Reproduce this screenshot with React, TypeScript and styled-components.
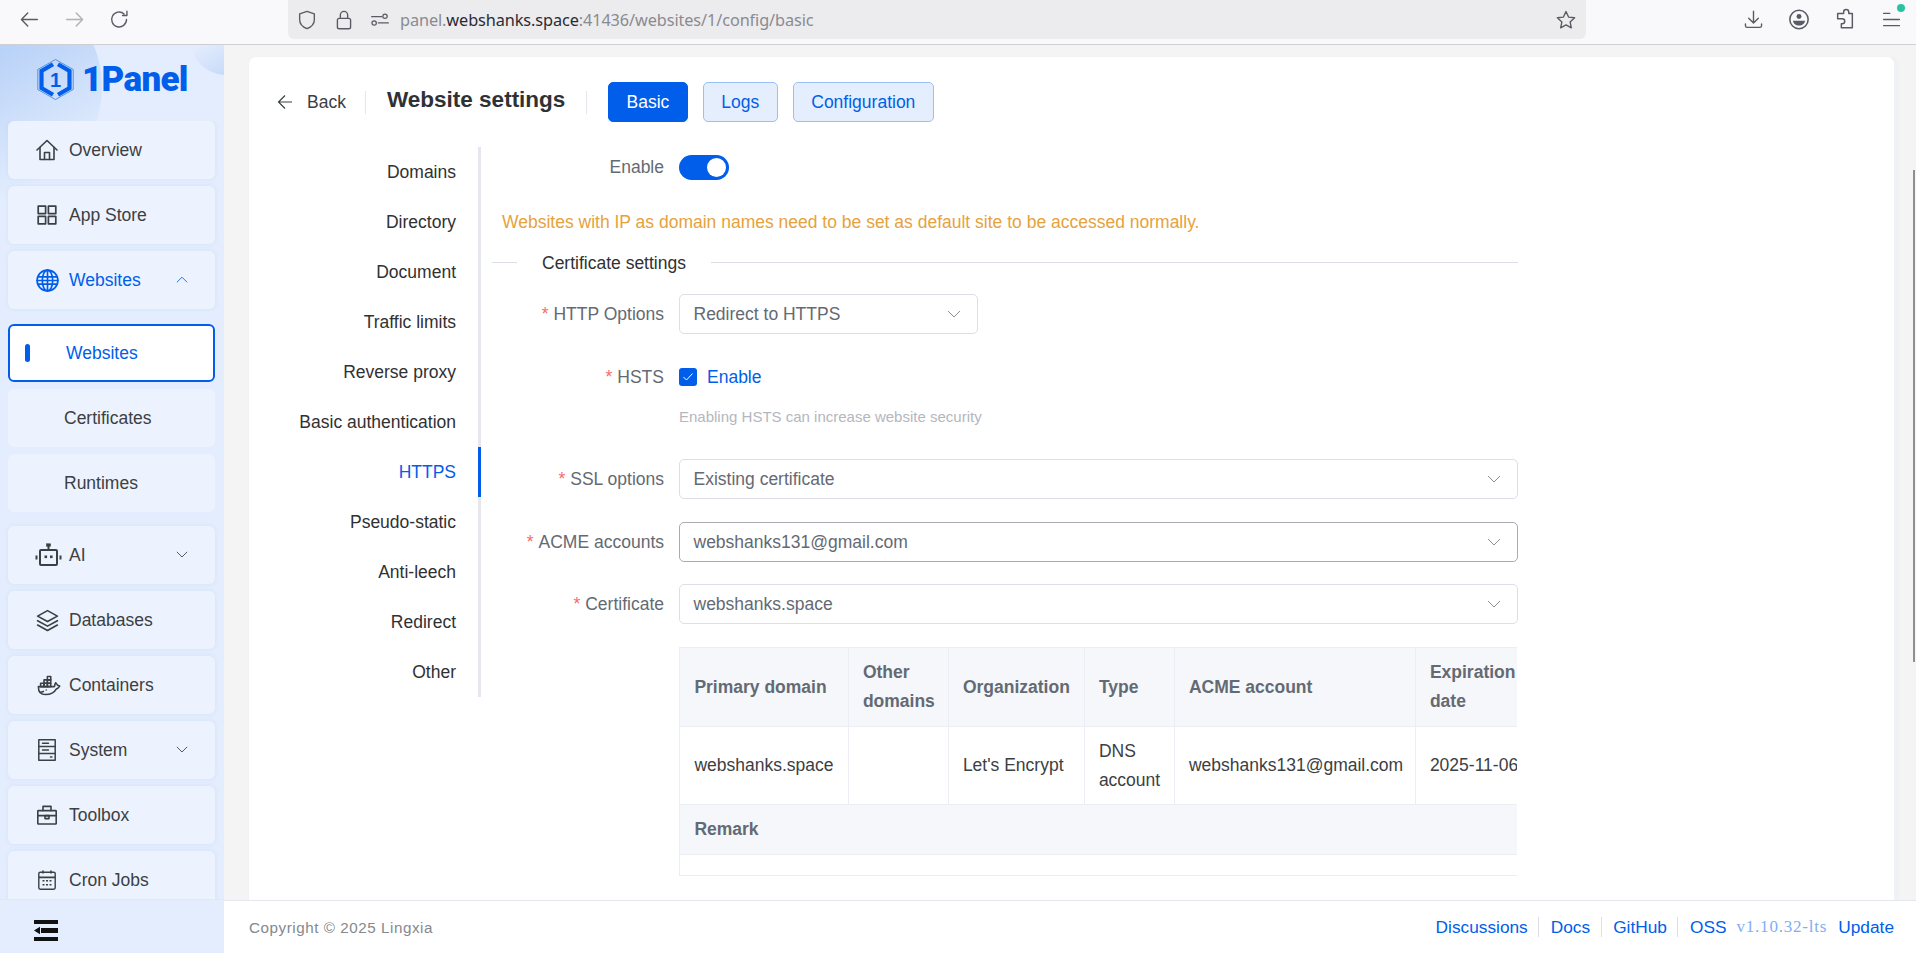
import React from "react";
import styled, { createGlobalStyle } from "styled-components";
import { TbBrandDocker } from "react-icons/tb";

const BLUE = "#005eeb";

const GlobalStyle = createGlobalStyle`
  html, body {
    margin: 0;
    padding: 0;
    height: 100%;
    overflow: hidden;
  }
  body {
    font-family: "Liberation Sans", Arial, sans-serif;
    font-size: 17.5px;
  }
  * { box-sizing: border-box; }
`;

const Ico = ({ size = 24, sw = 1.7, color = "currentColor", children }: any) => (
  <svg width={size} height={size} viewBox="0 0 24 24" fill="none" stroke={color} strokeWidth={sw} strokeLinecap="round" strokeLinejoin="round">
    {children}
  </svg>
);

const ChevronDown = ({ up = false, color = "#8a8e96", width = 14 }: any) => (
  <svg width={width} height={width * 0.6} viewBox="0 0 14 8" fill="none" stroke={color} strokeWidth="1">
    <path d={up ? "M1 7.2 7 1.2l6 6" : "M1 .8l6 6 6-6"} />
  </svg>
);

const BackArrow = () => (
  <svg width="16" height="16" viewBox="0 0 16 16" fill="none" stroke="#3c4043" strokeWidth="1.2">
    <path d="M15 8H1.500M8 1.500 1.500 8 8 14.500" />
  </svg>
);

const HomeIcon = () => (
  <Ico size={24} sw={1.6}>
    <path d="M2 12 12 2.5 22 12" />
    <path d="M5 9.5V21.5h14V9.5" />
    <path d="M9.5 21.5v-7h5v7" />
  </Ico>
);
const GridIcon = () => (
  <Ico size={24} sw={1.7}>
    <rect x="3.2" y="3.2" width="7.4" height="7.4" />
    <rect x="13.4" y="3.2" width="7.4" height="7.4" />
    <rect x="3.2" y="13.4" width="7.4" height="7.4" />
    <rect x="13.4" y="13.4" width="7.4" height="7.4" />
  </Ico>
);
const GlobeIcon = () => (
  <Ico size={25} sw={1.6}>
    <circle cx="12" cy="12" r="10" />
    <ellipse cx="12" cy="12" rx="5" ry="10" />
    <path d="M12 2v20M2.6 8.5h18.8M2 12h20M2.6 15.5h18.8" />
  </Ico>
);
const RobotIcon = () => (
  <svg width="27" height="25" viewBox="0 0 27 25" fill="none" stroke="#3c4043" strokeWidth="2">
    <rect x="5" y="7" width="17" height="15" rx="1" />
    <path d="M13.5 3v4" />
    <rect x="11.5" y="0.8" width="4" height="2.4" fill="#3c4043" strokeWidth="0.6" />
    <rect x="9.5" y="12.5" width="2.6" height="2.6" fill="#3c4043" stroke="none" />
    <rect x="15" y="12.5" width="2.6" height="2.6" fill="#3c4043" stroke="none" />
    <path d="M1.5 12.5v4M25.5 12.5v4" />
  </svg>
);
const LayersIcon = () => (
  <Ico size={25} sw={1.6}>
    <path d="M12 2.5 2.5 7.8l9.5 5.2 9.5-5.2z" />
    <path d="M2.5 12.2l9.5 5.2 9.5-5.2" />
    <path d="M2.5 16.4l9.5 5.2 9.5-5.2" />
  </Ico>
);
const ServerIcon = () => (
  <Ico size={24} sw={1.5}>
    <rect x="3.8" y="1.8" width="16.4" height="20.4" />
    <path d="M3.8 8.6h16.4M3.8 15.4h16.4M7.5 5.2h6M7.5 12h6M15.5 19h1.4" />
  </Ico>
);
const ToolboxIcon = () => (
  <Ico size={24} sw={1.6}>
    <rect x="2.8" y="7.6" width="18.4" height="13.4" rx="0.6" />
    <path d="M8 7.6V3.4h8v4.2M2.8 12.6h18.4" />
    <rect x="10" y="12.6" width="4" height="3" />
  </Ico>
);
const CalendarIcon = () => (
  <Ico size={24} sw={1.4}>
    <rect x="3.8" y="4.2" width="16.4" height="17" rx="1.4" />
    <path d="M3.8 9.4h16.4M8 2.6v3M16 2.6v3M7.5 12.8h2M11 12.8h2M14.5 12.8h2M7.5 16.8h2M11 16.8h2M14.5 16.8h2" strokeWidth="1.6" strokeLinecap="butt" />
  </Ico>
);

const ShieldIcon = () => (
  <Ico size={22} sw={1.5} color="#5b5b66">
    <path d="M12 2.5 4 5.3v6.4c0 4.8 3.2 7.900 8 9.800 4.800-1.900 8-5 8-9.800V5.300z" />
  </Ico>
);
const LockIcon = () => (
  <Ico size={22} sw={1.5} color="#5b5b66">
    <rect x="4.8" y="10.2" width="14.4" height="11.4" rx="2" />
    <path d="M8 10.2V6.6a4 4 0 0 1 8 0v3.6" />
  </Ico>
);
const TuneIcon = () => (
  <Ico size={20} sw={1.5} color="#5b5b66">
    <path d="M2 8h12M10 15.5h12" />
    <circle cx="18" cy="7.5" r="2.6" />
    <circle cx="5" cy="15.5" r="2.6" />
  </Ico>
);
const StarIcon = () => (
  <Ico size={22} sw={1.5} color="#5b5b66">
    <path d="M12 2.8l2.800 6 6.600.8-4.900 4.500 1.300 6.500L12 17.300l-5.800 3.300 1.300-6.500-4.900-4.500 6.600-.8z" />
  </Ico>
);
const DownloadIcon = () => (
  <Ico size={21} sw={1.6} color="#5b5b66">
    <path d="M12 2.5v13M6.5 10.5l5.500 5.500 5.500-5.500M2.800 17v2a2 2 0 0 0 2 2h14.400a2 2 0 0 0 2-2v-2" />
  </Ico>
);
const AccountIcon = () => (
  <Ico size={23} sw={1.7} color="#5b5b66">
    <circle cx="12" cy="12" r="10" />
    <circle cx="12" cy="8.8" r="2.7" fill="#5b5b66" stroke="none" />
    <path d="M5.400 13.400h13.200c-.4 3-3 5.200-6.600 5.200s-6.200-2.200-6.600-5.200z" fill="#5b5b66" stroke="none" />
  </Ico>
);
const PuzzleIcon = () => (
  <Ico size={22} sw={1.6} color="#5b5b66">
    <path d="M10.500 6V4.500a2.800 2.800 0 0 1 5.600 0V6H20v15.500H8v-4.300h1a2.700 2.700 0 0 0 0-5.400H4V6z" />
  </Ico>
);
const MenuIcon = () => (
  <Ico size={21} sw={1.6} color="#5b5b66">
    <path d="M3 5h7M3 12h18M3 19h18" />
  </Ico>
);
const CollapseIcon = () => (
  <svg width="24" height="21" viewBox="0 0 24 21" fill="#111">
    <rect x="0" y="0" width="24" height="4" />
    <rect x="7" y="8" width="17" height="5" />
    <rect x="0" y="17" width="24" height="4" />
    <polygon points="0,10.500 6,6.800 6,14.200" />
  </svg>
);

const LogoMark = () => (
  <svg width="37" height="41" viewBox="0 0 37 41" fill="none">
    <polygon points="18.500,0.500 36.200,10.500 36.200,30.500 18.500,40.500 0.800,30.500 0.800,10.500" stroke={BLUE} strokeWidth="0.6" />
    <path d="M16 5.200 4.500 12v17L16 35.800M21 5.200 32.500 12v17L21 35.800" stroke={BLUE} strokeWidth="4.200" />
    <text x="18.500" y="27.500" fontSize="20" fontWeight="700" textAnchor="middle" fill={BLUE} fontFamily="Liberation Sans, sans-serif">1</text>
  </svg>
);

const Page = styled.div`
  width: 1916px;
  height: 953px;
  display: flex;
  flex-direction: column;
  overflow: hidden;
  position: relative;
  background: #f4f4f4;
`;

const Toolbar = styled.header`
  height: 45px;
  flex: none;
  display: flex;
  background: #f9f9fb;
  border-bottom: 1px solid #cfcfd3;
`;

const NavGroup = styled.div`
  width: 288px;
  height: 38px;
  padding-left: 19px;
  display: flex;
  align-items: center;
  gap: 24px;
`;

const NavBtn = styled.span<{ $dim?: boolean }>`
  width: 21px;
  display: flex;
  justify-content: center;
  opacity: ${(p) => (p.$dim ? 0.45 : 1)};
`;

const AddressBar = styled.div`
  width: 1298px;
  height: 39px;
  padding: 0 9px 0 8px;
  display: flex;
  align-items: center;
  background: #ececee;
  border-radius: 0 0 6px 6px;
`;

const AddressIcons = styled.div`
  width: 104px;
  display: flex;
  align-items: center;
  gap: 15px;
`;

const Url = styled.div`
  flex: 1;
  font-family: "Noto Sans", sans-serif;
  font-size: 16.3px;
  letter-spacing: -0.1px;
  color: #8a8a90;
  white-space: nowrap;
  b {
    font-weight: 400;
    color: #2b2a33;
  }
`;

const BrowserActions = styled.div`
  height: 38px;
  padding-left: 156px;
  display: flex;
  align-items: center;
  gap: 24px;
`;

const ActionBtn = styled.span`
  position: relative;
  width: 22px;
  display: flex;
  justify-content: center;
`;

const UpdateDot = styled.i`
  position: absolute;
  top: -5px;
  right: -3px;
  width: 8px;
  height: 8px;
  border-radius: 50%;
  background: #2ac3a2;
`;

const Body = styled.div`
  flex: 1;
  min-height: 0;
  display: flex;
`;

const Sidebar = styled.aside`
  width: 224px;
  flex: none;
  position: relative;
  overflow: hidden;
  display: flex;
  flex-direction: column;
  background: #e3edfd;
  &::before {
    content: "";
    position: absolute;
    left: -118px;
    top: -68px;
    width: 220px;
    height: 220px;
    border-radius: 50%;
    background: linear-gradient(150deg, #a9c8f6 25%, #e3edfd 85%);
  }
  &::after {
    content: "";
    position: absolute;
    left: 190px;
    top: -42px;
    width: 72px;
    height: 72px;
    border-radius: 50%;
    background: linear-gradient(150deg, #eef4fe 25%, #c2d6f9 90%);
  }
`;

const LogoRow = styled.div`
  position: relative;
  z-index: 1;
  height: 76px;
  flex: none;
  padding: 14px 0 0 37px;
  display: flex;
  align-items: flex-start;
  gap: 8px;
`;

const LogoText = styled.span`
  font-family: "Roboto", "Liberation Sans", sans-serif;
  font-weight: 900;
  font-size: 35px;
  line-height: 41px;
  letter-spacing: -0.7px;
  color: ${BLUE};
`;

const Nav = styled.nav`
  position: relative;
  z-index: 1;
  flex: 1;
  min-height: 0;
  overflow: hidden;
  padding: 0 9px 0 8px;
  display: flex;
  flex-direction: column;
  gap: 7px;
`;

const NavItem = styled.div<{ $active?: boolean }>`
  height: 58px;
  flex: none;
  padding: 0 27px 0 29px;
  display: flex;
  align-items: center;
  border-radius: 6px;
  background: #ecf3fe;
  box-shadow: 0 0 4px rgba(190, 210, 245, 0.45);
  color: ${(p) => (p.$active ? BLUE : "#3c4043")};
`;

const NavIcon = styled.span`
  width: 34px;
  margin-left: -2px;
  flex: none;
  display: flex;
  align-items: center;
`;

const NavLabel = styled.span`
  flex: 1;
`;

const SubList = styled.div`
  margin: 8px 0 7px;
  display: flex;
  flex-direction: column;
  gap: 7px;
`;

const SubItem = styled.div<{ $active?: boolean }>`
  position: relative;
  height: 58px;
  padding-left: 56px;
  display: flex;
  align-items: center;
  border-radius: 6px;
  background: ${(p) => (p.$active ? "#fff" : "#ecf3fe")};
  border: ${(p) => (p.$active ? `2px solid ${BLUE}` : "none")};
  color: ${(p) => (p.$active ? BLUE : "#3c4043")};
  ${(p) =>
    p.$active &&
    `&::before {
      content: "";
      position: absolute;
      left: 15px;
      top: 18px;
      width: 5px;
      height: 18px;
      border-radius: 3px;
      background: ${BLUE};
    }`}
`;

const CollapseBar = styled.div`
  position: relative;
  z-index: 1;
  height: 54px;
  flex: none;
  padding: 20px 0 0 34px;
  background: #e3edfd;
  border-top: 1px solid #e4e7ed;
`;

const Main = styled.main`
  flex: 1;
  min-width: 0;
  display: flex;
  flex-direction: column;
`;

const Content = styled.div`
  flex: 1;
  min-height: 0;
  padding: 12px 22px 0 25px;
  overflow: hidden;
`;

const Card = styled.section`
  height: 100%;
  padding: 25px 0 0 28px;
  background: #fff;
  border-radius: 7px 7px 0 0;
  box-shadow: 0 0 0 1px #f0f2f6, 5px 0 0 0 #eff1f5;
`;

const Header = styled.div`
  height: 40px;
  margin-bottom: 25px;
  display: flex;
  align-items: center;
`;

const BackLink = styled.div`
  width: 89px;
  height: 23px;
  display: flex;
  align-items: center;
  gap: 14px;
  color: #3c4043;
  border-right: 1px solid #e4e7ed;
`;

const Title = styled.h1`
  margin: 0;
  width: 221px;
  height: 23px;
  padding-left: 21px;
  font-size: 22.5px;
  line-height: 18px;
  font-weight: 700;
  color: #2f3235;
  border-right: 1px solid #e4e7ed;
`;

const ButtonRow = styled.div`
  margin-left: 21px;
  display: flex;
  gap: 15px;
`;

const TabButton = styled.button<{ $primary?: boolean }>`
  height: 40px;
  padding: 0 17.5px;
  font: inherit;
  font-size: 17.5px;
  border-radius: 5px;
  border: 1px solid ${(p) => (p.$primary ? BLUE : "#99bff7")};
  background: ${(p) => (p.$primary ? BLUE : "#e5eefd")};
  color: ${(p) => (p.$primary ? "#fff" : BLUE)};
`;

const SettingsRow = styled.div`
  display: flex;
  align-items: flex-start;
`;

const SideTabs = styled.ul`
  width: 204px;
  margin: 0;
  padding: 0;
  list-style: none;
  flex: none;
  border-right: 3px solid #e4e7ed;
`;

const SideTab = styled.li<{ $active?: boolean }>`
  position: relative;
  height: 50px;
  padding-right: 22px;
  display: flex;
  align-items: center;
  justify-content: flex-end;
  color: ${(p) => (p.$active ? BLUE : "#303133")};
  ${(p) =>
    p.$active &&
    `&::after {
      content: "";
      position: absolute;
      right: -3px;
      top: 0;
      width: 3px;
      height: 50px;
      background: ${BLUE};
    }`}
`;

const FormPane = styled.div`
  width: 1026px;
  margin-left: 11px;
  flex: none;
`;

const FormRow = styled.div<{ $top?: number; $h?: number }>`
  display: flex;
  align-items: center;
  height: ${(p) => p.$h ?? 40}px;
  margin-top: ${(p) => p.$top ?? 0}px;
`;

const Label = styled.label`
  width: 172px;
  margin-right: 15px;
  flex: none;
  text-align: right;
  color: #646a73;
  white-space: nowrap;
`;

const Star = styled.span`
  margin-right: 5px;
  color: #f56c6c;
`;

const Switch = styled.div`
  position: relative;
  width: 50px;
  height: 25px;
  border-radius: 13px;
  background: ${BLUE};
  &::after {
    content: "";
    position: absolute;
    right: 3px;
    top: 3px;
    width: 19px;
    height: 19px;
    border-radius: 50%;
    background: #fff;
  }
`;

const Warning = styled.div`
  margin: 22px 0 0 10px;
  line-height: 26px;
  color: #e6a23c;
`;

const Divider = styled.div`
  height: 20px;
  margin-top: 17px;
  display: flex;
  align-items: center;
  color: #303133;
  &::before {
    content: "";
    width: 25px;
    height: 1px;
    background: #dcdfe6;
  }
  &::after {
    content: "";
    flex: 1;
    height: 1px;
    background: #dcdfe6;
  }
  span {
    padding: 2px 25px 0;
  }
`;

const Select = styled.div<{ $w?: number; $hover?: boolean }>`
  width: ${(p) => (p.$w ? `${p.$w}px` : "100%")};
  height: 40px;
  padding: 0 16px 0 13.5px;
  display: flex;
  align-items: center;
  justify-content: space-between;
  background: #fff;
  color: #646a73;
  border: 1px solid ${(p) => (p.$hover ? "#a8abb2" : "#dcdfe6")};
  border-radius: 5px;
`;

const CheckBox = styled.span`
  width: 18px;
  height: 18px;
  margin-right: 10px;
  display: flex;
  align-items: center;
  justify-content: center;
  border-radius: 3px;
  background: ${BLUE};
`;

const CheckText = styled.span`
  color: ${BLUE};
`;

const Help = styled.div`
  margin: 15px 0 0 187px;
  font-size: 15px;
  line-height: 22px;
  color: #b4b6c0;
`;

const TableClip = styled.div`
  width: 838px;
  margin: 23px 0 0 187px;
  overflow: hidden;
`;

const Table = styled.table`
  width: 855.5px;
  table-layout: fixed;
  border-collapse: collapse;
  color: #3c4043;
`;

const Col = styled.col<{ $w: number }>`
  width: ${(p) => p.$w}px;
`;

const Th = styled.th<{ $h?: number }>`
  height: ${(p) => p.$h ?? 79}px;
  padding: 0 10px 0 14.4px;
  font-weight: 700;
  line-height: 29px;
  text-align: left;
  color: #646a73;
  background: #f5f7fa;
  border: 1px solid #ebeef5;
`;

const Td = styled.td<{ $h?: number }>`
  height: ${(p) => p.$h ?? 78}px;
  padding: 0 10px 0 14.4px;
  line-height: 29px;
  border: 1px solid #ebeef5;
`;

const Footer = styled.footer`
  height: 53px;
  flex: none;
  padding: 0 22px 0 25px;
  display: flex;
  align-items: center;
  justify-content: space-between;
  background: #fff;
  border-top: 1px solid #e4e7ed;
`;

const Copyright = styled.span`
  font-size: 15.2px;
  letter-spacing: 0.55px;
  color: #85888f;
`;

const FootLinks = styled.div`
  display: flex;
  align-items: center;
`;

const FootLink = styled.span<{ $sep?: boolean }>`
  height: 20px;
  font-size: 17.3px;
  line-height: 20px;
  color: ${BLUE};
  ${(p) => p.$sep && `padding-right: 10.5px; margin-right: 11.5px; border-right: 1px solid #dcdfe6;`}
`;

const Version = styled.span`
  margin: 0 11px 0 10px;
  font-family: "Liberation Serif", serif;
  font-size: 17px;
  letter-spacing: 0.8px;
  color: #80aef5;
`;

const ScrollThumb = styled.div`
  position: absolute;
  right: 1px;
  top: 170px;
  width: 2px;
  height: 492px;
  background: #8f8f8f;
`;

const tabs = ["Domains", "Directory", "Document", "Traffic limits", "Reverse proxy", "Basic authentication", "HTTPS", "Pseudo-static", "Anti-leech", "Redirect", "Other"];

const Req = ({ children }: { children: React.ReactNode }) => (
  <Label>
    <Star>*</Star>
    {children}
  </Label>
);

const App = () => (
  <Page>
    <GlobalStyle />
    <Toolbar>
      <NavGroup>
        <NavBtn>
          <Ico size={21} sw={1.6} color="#5b5b66"><path d="M21 12H3M10 4.500 2.800 12l7.200 7.500" /></Ico>
        </NavBtn>
        <NavBtn $dim>
          <Ico size={21} sw={1.6} color="#5b5b66"><path d="M3 12h18M14 4.500l7.200 7.500-7.200 7.500" /></Ico>
        </NavBtn>
        <NavBtn>
          <Ico size={21} sw={1.6} color="#5b5b66"><path d="M20 12a8.500 8.500 0 1 1-2.800-6.300M20.500 2.500v5h-5" /></Ico>
        </NavBtn>
      </NavGroup>
      <AddressBar>
        <AddressIcons>
          <ShieldIcon />
          <LockIcon />
          <TuneIcon />
        </AddressIcons>
        <Url>
          panel.<b>webshanks.space</b>:41436/websites/1/config/basic
        </Url>
        <StarIcon />
      </AddressBar>
      <BrowserActions>
        <ActionBtn><DownloadIcon /></ActionBtn>
        <ActionBtn><AccountIcon /></ActionBtn>
        <ActionBtn><PuzzleIcon /></ActionBtn>
        <ActionBtn><MenuIcon /><UpdateDot /></ActionBtn>
      </BrowserActions>
    </Toolbar>
    <Body>
      <Sidebar>
        <LogoRow>
          <LogoMark />
          <LogoText>1Panel</LogoText>
        </LogoRow>
        <Nav>
          <NavItem><NavIcon><HomeIcon /></NavIcon><NavLabel>Overview</NavLabel></NavItem>
          <NavItem><NavIcon><GridIcon /></NavIcon><NavLabel>App Store</NavLabel></NavItem>
          <NavItem $active>
            <NavIcon><GlobeIcon /></NavIcon>
            <NavLabel>Websites</NavLabel>
            <ChevronDown up color={BLUE} width={12} />
          </NavItem>
          <SubList>
            <SubItem $active>Websites</SubItem>
            <SubItem>Certificates</SubItem>
            <SubItem>Runtimes</SubItem>
          </SubList>
          <NavItem>
            <NavIcon><RobotIcon /></NavIcon>
            <NavLabel>AI</NavLabel>
            <ChevronDown color="#3c4043" width={12} />
          </NavItem>
          <NavItem><NavIcon><LayersIcon /></NavIcon><NavLabel>Databases</NavLabel></NavItem>
          <NavItem><NavIcon><TbBrandDocker size={27} strokeWidth={1.4} /></NavIcon><NavLabel>Containers</NavLabel></NavItem>
          <NavItem>
            <NavIcon><ServerIcon /></NavIcon>
            <NavLabel>System</NavLabel>
            <ChevronDown color="#3c4043" width={12} />
          </NavItem>
          <NavItem><NavIcon><ToolboxIcon /></NavIcon><NavLabel>Toolbox</NavLabel></NavItem>
          <NavItem><NavIcon><CalendarIcon /></NavIcon><NavLabel>Cron Jobs</NavLabel></NavItem>
        </Nav>
        <CollapseBar><CollapseIcon /></CollapseBar>
      </Sidebar>
      <Main>
        <Content>
          <Card>
            <Header>
              <BackLink><BackArrow />Back</BackLink>
              <Title>Website settings</Title>
              <ButtonRow>
                <TabButton $primary>Basic</TabButton>
                <TabButton>Logs</TabButton>
                <TabButton>Configuration</TabButton>
              </ButtonRow>
            </Header>
            <SettingsRow>
              <SideTabs>
                {tabs.map((t) => (
                  <SideTab key={t} $active={t === "HTTPS"}>{t}</SideTab>
                ))}
              </SideTabs>
              <FormPane>
                <FormRow>
                  <Label>Enable</Label>
                  <Switch />
                </FormRow>
                <Warning>Websites with IP as domain names need to be set as default site to be accessed normally.</Warning>
                <Divider><span>Certificate settings</span></Divider>
                <FormRow $top={22}>
                  <Req>HTTP Options</Req>
                  <Select $w={299}>Redirect to HTTPS<ChevronDown /></Select>
                </FormRow>
                <FormRow $top={29} $h={28}>
                  <Req>HSTS</Req>
                  <CheckBox>
                    <svg width="12" height="10" viewBox="0 0 12 10" fill="none" stroke="#fff" strokeWidth="1">
                      <path d="M1.500 5l3 3 6-6.500" />
                    </svg>
                  </CheckBox>
                  <CheckText>Enable</CheckText>
                </FormRow>
                <Help>Enabling HSTS can increase website security</Help>
                <FormRow $top={31}>
                  <Req>SSL options</Req>
                  <Select>Existing certificate<ChevronDown /></Select>
                </FormRow>
                <FormRow $top={23}>
                  <Req>ACME accounts</Req>
                  <Select $hover>webshanks131@gmail.com<ChevronDown /></Select>
                </FormRow>
                <FormRow $top={22}>
                  <Req>Certificate</Req>
                  <Select>webshanks.space<ChevronDown /></Select>
                </FormRow>
                <TableClip>
                  <Table>
                    <colgroup>
                      <Col $w={168.5} />
                      <Col $w={100} />
                      <Col $w={136} />
                      <Col $w={90} />
                      <Col $w={241} />
                      <Col $w={120} />
                    </colgroup>
                    <tbody>
                      <tr>
                        <Th>Primary domain</Th>
                        <Th>Other domains</Th>
                        <Th>Organization</Th>
                        <Th>Type</Th>
                        <Th>ACME account</Th>
                        <Th>Expiration date</Th>
                      </tr>
                      <tr>
                        <Td>webshanks.space</Td>
                        <Td></Td>
                        <Td>Let's Encrypt</Td>
                        <Td>DNS account</Td>
                        <Td>webshanks131@gmail.com</Td>
                        <Td>2025-11-06</Td>
                      </tr>
                      <tr>
                        <Th colSpan={6} $h={50}>Remark</Th>
                      </tr>
                      <tr>
                        <Td colSpan={6} $h={21}></Td>
                      </tr>
                    </tbody>
                  </Table>
                </TableClip>
              </FormPane>
            </SettingsRow>
          </Card>
        </Content>
        <Footer>
          <Copyright>Copyright © 2025 Lingxia</Copyright>
          <FootLinks>
            <FootLink $sep>Discussions</FootLink>
            <FootLink $sep>Docs</FootLink>
            <FootLink $sep>GitHub</FootLink>
            <FootLink>OSS</FootLink>
            <Version>v1.10.32-lts</Version>
            <FootLink>Update</FootLink>
          </FootLinks>
        </Footer>
      </Main>
    </Body>
    <ScrollThumb />
  </Page>
);

export default App;
